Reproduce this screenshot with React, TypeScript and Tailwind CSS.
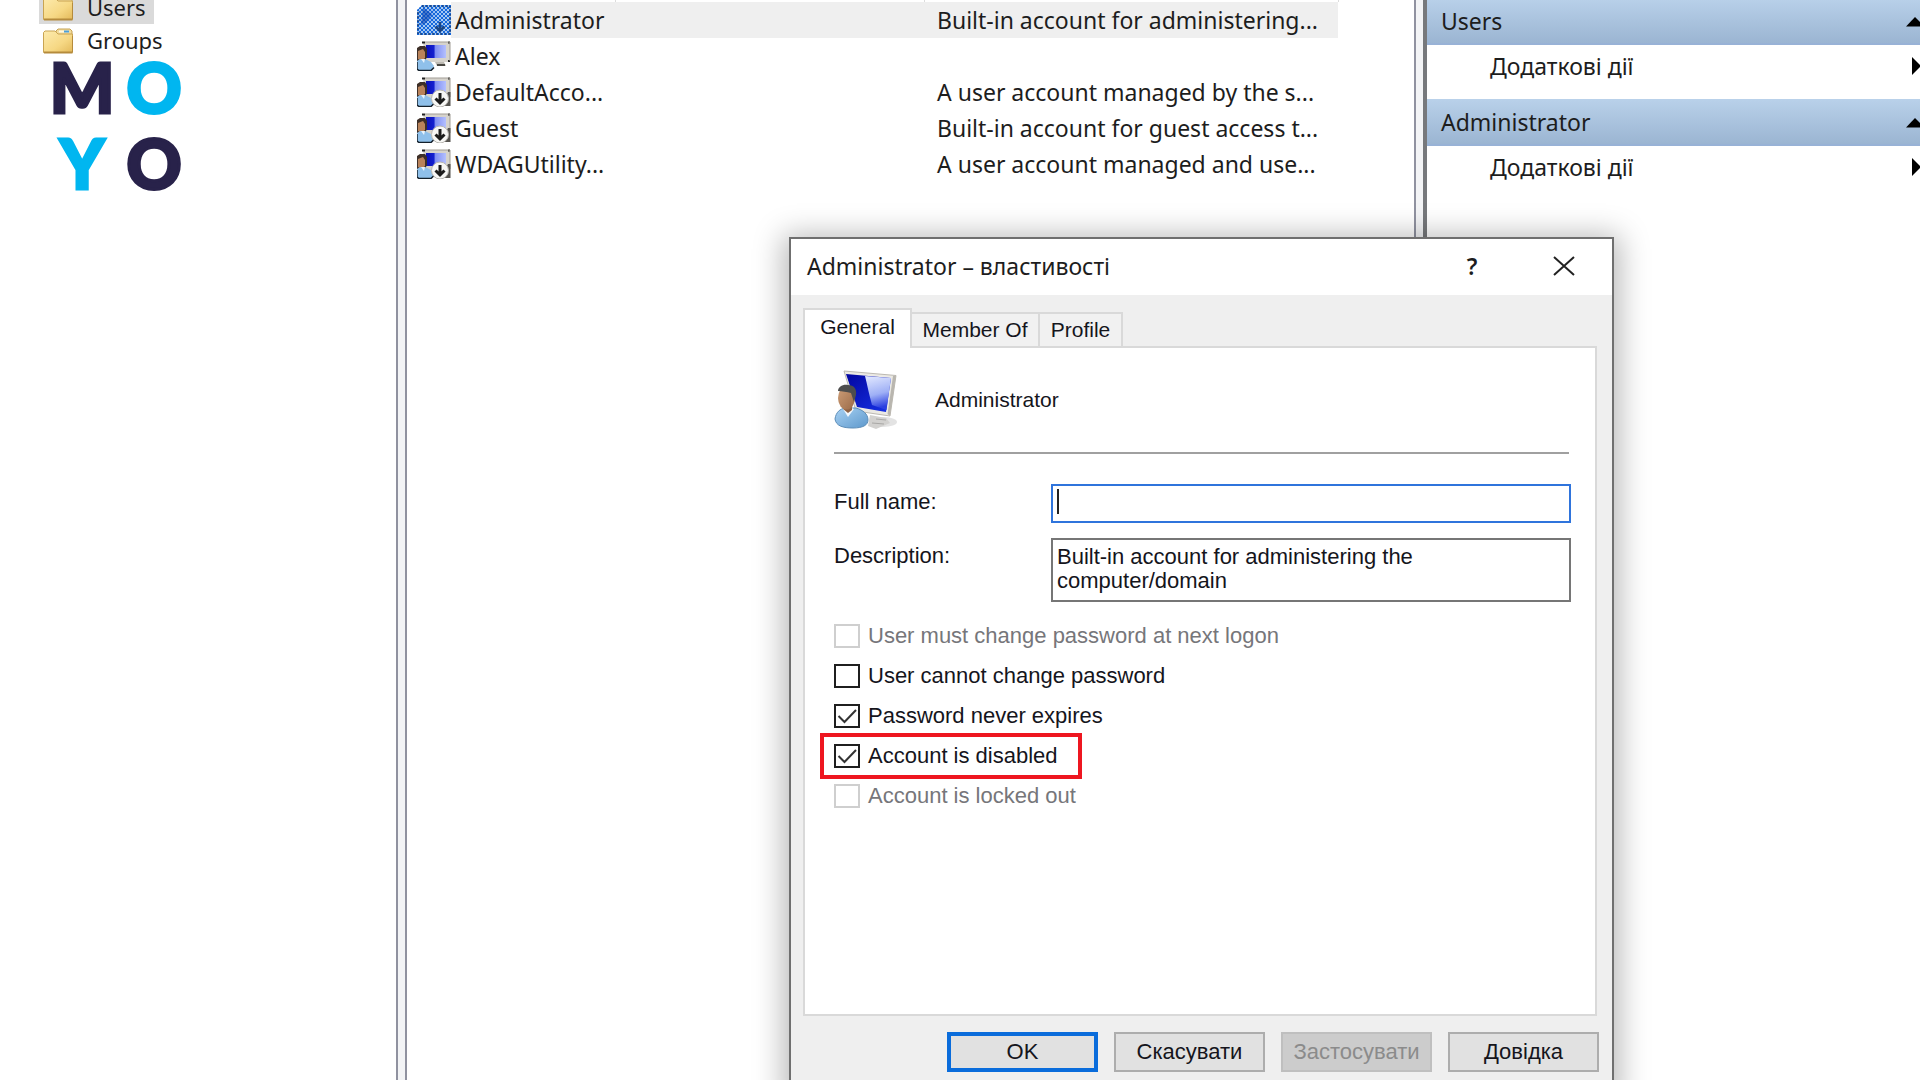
import { ReactNode, useState } from "react";

const SHELL_FONT = "font-['Noto_Sans','Open_Sans',sans-serif]";
const DIALOG_FONT = "font-['Liberation_Sans',Arial,sans-serif]";

function Folder({ open = false }: { open?: boolean }) {
  return (
    <svg viewBox="0 0 30 26" className="h-[26px] w-[30px] shrink-0" aria-hidden="true">
      <defs>
        <linearGradient id="folderFill" x1="0" y1="0" x2="1" y2="1">
          <stop offset="0" stopColor="#fdebae" />
          <stop offset="0.6" stopColor="#f6d884" />
          <stop offset="1" stopColor="#e3b95a" />
        </linearGradient>
      </defs>
      <path d="M13 5V3l2-2h12l2 2v5H13z" fill="#f3dc9c" stroke="#c4a254" />
      {!open && <path d="M16 3.500h10" stroke="#fff8e0" strokeWidth="2" />}
      {!open && <path d="M21 3.500h5" stroke="#4a9fd8" strokeWidth="2" />}
      <path d="M.5 4.500 2 3h10l3 3h14.500V24.500H.5z" fill="url(#folderFill)" stroke="#c9a452" />
      <path d="M1 24.500h28.500" stroke="#b58b3c" strokeWidth="2" />
      <path d="M29.500 8v16" stroke="#b58b3c" />
    </svg>
  );
}

function SmallUser({ disabled, selected }: { disabled?: boolean; selected?: boolean }) {
  return (
    <svg viewBox="0 0 34 30" className="block h-[30px] w-[34px]" aria-hidden="true">
      <defs>
        <linearGradient id="smallScreen" x1="0" x2="1" y1="0" y2="0">
          <stop offset="0" stopColor="#0a10b8" />
          <stop offset="0.4" stopColor="#1420d0" />
          <stop offset="0.46" stopColor="#7f8ef2" />
          <stop offset="1" stopColor="#b4c0ff" />
        </linearGradient>
        <pattern id="dither" width="4" height="4" patternUnits="userSpaceOnUse">
          <rect width="2" height="2" fill="#1668dc" />
          <rect x="2" y="2" width="2" height="2" fill="#1668dc" />
        </pattern>
      </defs>
      <path d="M6 1h27v20H8z" fill="#d6d3cc" />
      <path d="M5 1.500h3M31 1.500h2M31 20h2" stroke="#222" strokeWidth="2" />
      <path d="M8 1h25v19" fill="none" stroke="#a19d95" />
      <path d="M9 4h20v13H9z" fill="url(#smallScreen)" />
      <path d="M18 21h9l2 4h-9z" fill="#bdbab3" />
      <path d="M20 24h8" stroke="#4a4843" strokeWidth="2" />
      <path d="M0 7l3-2h5l2 3v8l-2 4H0z" fill="#3d2f28" />
      <path d="M1 10l5-2 2 3v6l-3 3-4-2z" fill="#b9835b" />
      <path d="M0 29V20l3-2h5l6 3 3 4-2 4z" fill="#8fc0ea" />
      <path d="M0 21v7l2 1.500h12l3-3" fill="none" stroke="#14202b" strokeWidth="1.500" />
      <path d="M4 18l3 4 1-4z" fill="#e9f3fb" />
      {disabled && (
        <g>
          <path d="M31 15h2.500v14H24z" fill="#55534f" />
          <circle cx="23" cy="21.500" r="8.500" fill="#f7f7f5" stroke="#b9b7b2" />
          <path d="M23 16v9M18.500 21.500 23 26l4.500-4.500" fill="none" stroke="#1c1c1c" strokeWidth="3" />
        </g>
      )}
      {selected && (
        <g>
          <path d="M5 0h29v30H0V5z" fill="#a4c8f2" opacity="0.92" />
          <path d="M5 0h29v30H0V5z" fill="url(#dither)" />
          <path d="M5 1h28v28H1V5" fill="none" stroke="#17407f" strokeWidth="1.500" strokeDasharray="2 2" />
          <path d="M6 3l9 6-6 9-5 2z" fill="#0c46b4" opacity="0.6" />
          <path d="M23 17v7M18.500 21.500 23 26l4.500-4.500" fill="none" stroke="#1c4684" strokeWidth="2.500" />
        </g>
      )}
    </svg>
  );
}

function LargeUser() {
  return (
    <svg viewBox="0 0 64 60" className="h-[60px] w-16 shrink-0" aria-hidden="true">
      <defs>
        <linearGradient id="screenGlare" x1="0" y1="0" x2="0.2" y2="1">
          <stop offset="0" stopColor="#e4eaff" />
          <stop offset="0.6" stopColor="#9fb0f6" />
          <stop offset="1" stopColor="#2c40e0" />
        </linearGradient>
        <linearGradient id="screenBlue" x1="0" y1="0" x2="1" y2="1">
          <stop offset="0" stopColor="#0306a0" />
          <stop offset="1" stopColor="#1733e8" />
        </linearGradient>
        <linearGradient id="shirt" x1="0" y1="0" x2="1" y2="1">
          <stop offset="0" stopColor="#a9d2f3" />
          <stop offset="1" stopColor="#5d98cc" />
        </linearGradient>
        <linearGradient id="face" x1="0" y1="0" x2="1" y2="1">
          <stop offset="0" stopColor="#cf9f78" />
          <stop offset="1" stopColor="#9a6a48" />
        </linearGradient>
      </defs>
      <ellipse cx="49" cy="52" rx="14" ry="5" fill="#e3e3e3" />
      <path d="M36 45l16 3 4 5-14 6-8-3z" fill="#d2d1cf" />
      <path d="M38 53l12 1M42 49l10 1" stroke="#a9a8a6" />
      <path d="M10 1 62 5.500 56 46 22 41z" fill="#ebe9e4" stroke="#bcb9b2" />
      <path d="M59 6 62 5.500 56 46 53.500 44z" fill="#b9b6af" />
      <path d="M12 4 57 8 52 42 23 37z" fill="url(#screenBlue)" />
      <path d="M31 6 57 8 52.500 40 38 35C35 24 33 14 31 6z" fill="url(#screenGlare)" />
      <path d="M1 49c1-7 5-10 10-11h11c7 2 12 6 12 12 0 5-5 8-15 8S2 56 1 49z" fill="url(#shirt)" stroke="#5c8db8" />
      <path d="M9 39l5 8 6-8-5-2z" fill="#f4f8fc" />
      <path d="M9 34h9v6l-4 3-5-4z" fill="#8f6345" />
      <ellipse cx="12.500" cy="28" rx="8.500" ry="11.500" fill="url(#face)" />
      <path d="M4 21c0-4 5-7 10-6 6 0 9 4 8 10l-2 7-3-9c-4-1-9-2-13-2z" fill="#4d4d4d" />
    </svg>
  );
}

function Tree() {
  return (
    <nav aria-label="Console tree" className="h-full w-[398px] shrink-0 border-r-2 border-[#9092a0] bg-white">
      <ul className="flex flex-col items-start pl-[39px] text-[22px] leading-[33px] text-[#1d1d1d]">
        <li className="-mt-[9px] flex h-[33px] items-center gap-[14px] bg-[#dadada] pr-2 pl-1">
          <Folder open />
          <a href="#users">Users</a>
        </li>
        <li className="flex h-[33px] items-center gap-[14px] pl-1">
          <Folder />
          <a href="#groups">Groups</a>
        </li>
      </ul>
      <div
        role="img"
        aria-label="MOYO"
        className="mt-[-8px] ml-[46px] grid w-36 grid-cols-2 justify-items-center font-['Lato',sans-serif] text-[68px] leading-[76px] font-black text-[#28224a] [-webkit-text-stroke:3px_currentColor]"
      >
        <span>M</span>
        <span className="text-[#00b6f0]">O</span>
        <span className="text-[#00b6f0]">Y</span>
        <span>O</span>
      </div>
    </nav>
  );
}

const accounts = [
  { name: "Administrator", description: "Built-in account for administering...", disabled: true, selected: true },
  { name: "Alex", description: "", disabled: false, selected: false },
  { name: "DefaultAcco...", description: "A user account managed by the s...", disabled: true, selected: false },
  { name: "Guest", description: "Built-in account for guest access t...", disabled: true, selected: false },
  { name: "WDAGUtility...", description: "A user account managed and use...", disabled: true, selected: false },
];

function AccountList() {
  return (
    <section className="min-w-0 flex-1 border-x-2 border-[#9092a0] bg-white pl-[10px]">
      <table className="table-fixed border-collapse text-[23px] leading-[35px] text-[#1d1d1d]">
        <colgroup>
          <col className="w-[34px]" />
          <col className="w-[164px]" />
          <col className="w-[309px]" />
          <col className="w-[414px]" />
        </colgroup>
        <thead>
          <tr className="h-[2px]">
            <td />
            <td className="border-r border-[#dcdcdc]" />
            <td className="border-r border-[#dcdcdc]" />
            <td className="border-r border-[#dcdcdc]" />
          </tr>
        </thead>
        <tbody>
          {accounts.map((a) => {
            const bg = a.selected ? "bg-[#efefef]" : "";
            return (
              <tr key={a.name} className="h-9">
                <td className="p-0">
                  <SmallUser disabled={a.disabled} selected={a.selected} />
                </td>
                <td className={`p-0 pl-1 whitespace-nowrap ${bg}`}>{a.name}</td>
                <td className={`p-0 ${bg}`} />
                <td className={`p-0 pl-[13px] whitespace-nowrap ${bg}`}>{a.description}</td>
              </tr>
            );
          })}
        </tbody>
      </table>
    </section>
  );
}

function ActionGroup({ title }: { title: string }) {
  return (
    <section>
      <button
        type="button"
        className="flex h-[47px] w-full items-center justify-between border-b-2 border-[#98b2d6] bg-linear-to-b from-[#b9d1ea] to-[#9bb5d2] pt-[2px] pl-[14px] text-[#1d1d1d]"
      >
        {title}
        <svg viewBox="0 0 14 10" className="h-[10px] w-[14px]" aria-hidden="true">
          <path d="M0 9.500 9 0l5 5v4.500z" fill="#000" />
        </svg>
      </button>
      <button type="button" className="flex h-[42px] w-full items-center justify-between pl-[63px] text-[#1d1d1d]">
        Додаткові дії
        <svg viewBox="0 0 8 18" className="h-[18px] w-2" aria-hidden="true">
          <path d="M0 0l8 8v2l-8 8z" fill="#000" />
        </svg>
      </button>
    </section>
  );
}

function Actions() {
  return (
    <aside className="-mt-[2px] flex w-[497px] shrink-0 flex-col gap-3 border-l-4 border-[#77797c] bg-white text-[23px]">
      <ActionGroup title="Users" />
      <ActionGroup title="Administrator" />
    </aside>
  );
}

function Check({ label, disabled, initial = false }: { label: string; disabled?: boolean; initial?: boolean }) {
  const [on, setOn] = useState(initial);
  return (
    <label className={`flex items-center gap-2 ${disabled ? "text-[#76767a]" : "text-[#15151c]"}`}>
      <span className="grid">
        <input
          type="checkbox"
          checked={on}
          disabled={disabled}
          onChange={(e) => setOn(e.target.checked)}
          className="col-start-1 row-start-1 h-6 w-[26px] appearance-none border-2 border-[#1f1f1f] bg-white disabled:border-[#cfcfcf]"
        />
        {on && (
          <svg viewBox="0 0 26 24" className="pointer-events-none col-start-1 row-start-1 h-6 w-[26px]" aria-hidden="true">
            <path d="M4.500 12l6 6L22 6" fill="none" stroke="#333" strokeWidth="2" />
          </svg>
        )}
      </span>
      {label}
    </label>
  );
}

function DialogButton({ children, look, disabled }: { children: ReactNode; look: string; disabled?: boolean }) {
  return (
    <button type="button" disabled={disabled} className={`h-10 w-[151px] ${look}`}>
      {children}
    </button>
  );
}

function PropertiesDialog() {
  return (
    <div
      role="dialog"
      aria-labelledby="dialog-title"
      className="absolute top-[237px] left-[789px] w-[825px] border-2 border-[#6f6f6f] bg-[#efefef] shadow-[0_4px_28px_6px_rgba(0,0,0,0.28)]"
    >
      <header className={`flex h-14 items-center bg-white pr-[2px] pb-[2px] pl-4 text-[#1d1d1d] ${SHELL_FONT}`}>
        <h1 id="dialog-title" className="flex-1 text-[23px]">
          Administrator – властивості
        </h1>
        <button type="button" aria-label="Help" className="w-[92px] text-[23px] font-semibold">
          ?
        </button>
        <button type="button" aria-label="Close" className="flex w-[92px] justify-center">
          <svg viewBox="0 0 22 20" className="h-5 w-[22px]" aria-hidden="true">
            <path d="M1 1l20 18M21 1 1 19" stroke="#222" strokeWidth="2" />
          </svg>
        </button>
      </header>
      <div className={`pt-[13px] pr-[15px] pb-6 pl-3 text-[22px] leading-6 text-[#15151c] ${DIALOG_FONT}`}>
        <div role="tablist" className="flex items-end text-[21px]">
          <button
            type="button"
            role="tab"
            aria-selected="true"
            className="z-10 -mb-[2px] flex h-10 w-[109px] justify-center border-2 border-b-0 border-[#d9d9d9] bg-white pt-[5px]"
          >
            General
          </button>
          <button type="button" role="tab" aria-selected="false" className="h-[34px] w-[128px] border-t-2 border-r-2 border-[#d9d9d9] bg-[#f1f1f1]">
            Member Of
          </button>
          <button type="button" role="tab" aria-selected="false" className="h-[34px] w-[83px] border-t-2 border-r-2 border-[#d9d9d9] bg-[#f1f1f1]">
            Profile
          </button>
        </div>
        <div role="tabpanel" className="h-[670px] border-2 border-[#d9d9d9] bg-white pr-6 pl-[29px]">
          <div className="mr-[2px] flex h-[106px] items-center gap-[37px] border-b-2 border-[#a0a0a0] text-[21px]">
            <LargeUser />
            <span>Administrator</span>
          </div>
          <div className="mt-[30px] flex items-start">
            <label htmlFor="full-name" className="w-[217px] pt-[6px]">
              Full name:
            </label>
            <div className="relative flex-1">
              <input id="full-name" type="text" className="block h-[39px] w-full border-2 border-[#2f74dc] bg-white px-1 outline-none" />
              <span className="absolute top-[5px] left-[6px] h-[25px] w-[2px] bg-[#222]" />
            </div>
          </div>
          <div className="mt-[15px] flex items-start">
            <label htmlFor="description" className="w-[217px] pt-[6px]">
              Description:
            </label>
            <textarea
              id="description"
              defaultValue={"Built-in account for administering the computer/domain"}
              className="block h-16 flex-1 resize-none overflow-hidden border-2 border-[#767676] bg-white py-[5px] pr-[120px] pl-1 outline-none"
            />
          </div>
          <div className="mt-[22px] flex flex-col items-start gap-4">
            <Check label="User must change password at next logon" disabled />
            <Check label="User cannot change password" />
            <Check label="Password never expires" initial />
            <div className="-my-[11px] -ml-[14px] border-4 border-[#ee1620] py-[7px] pr-5 pl-[10px]">
              <Check label="Account is disabled" initial />
            </div>
            <Check label="Account is locked out" disabled />
          </div>
        </div>
        <div className="-mr-[2px] mt-4 flex justify-end gap-4">
          <DialogButton look="border-4 border-[#0a6cdb] bg-[#e1e1e1]">OK</DialogButton>
          <DialogButton look="border-2 border-[#adadad] bg-[#e1e1e1]">Скасувати</DialogButton>
          <DialogButton disabled look="border-2 border-[#bfbfbf] bg-[#cccccc] text-[#8b8b8b]">
            Застосувати
          </DialogButton>
          <DialogButton look="border-2 border-[#adadad] bg-[#e1e1e1]">Довідка</DialogButton>
        </div>
      </div>
    </div>
  );
}

export default function App() {
  return (
    <main className={`relative flex h-screen gap-[7px] overflow-hidden bg-[#f3f4f6] ${SHELL_FONT}`}>
      <Tree />
      <AccountList />
      <Actions />
      <PropertiesDialog />
    </main>
  );
}
